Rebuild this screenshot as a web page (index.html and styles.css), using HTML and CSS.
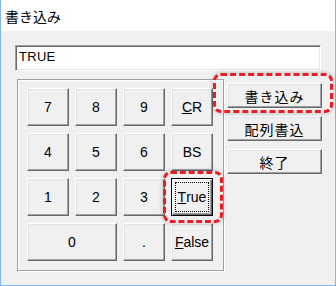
FILE: index.html
```html
<!DOCTYPE html>
<html lang="ja">
<head>
  <meta charset="UTF-8" />
  <title>書き込み</title>
  <link rel="stylesheet" href="styles.css">
</head>
<body>
  <div class="window">
    <div class="titlebar">書き込み</div>
    <div class="client">
      <div class="entry">TRUE</div>
      <div class="body">
        <div class="keypad">
          <button class="key">7</button>
          <button class="key">8</button>
          <button class="key">9</button>
          <button class="key"><u>C</u>R</button>
          <button class="key">4</button>
          <button class="key">5</button>
          <button class="key">6</button>
          <button class="key">BS</button>
          <button class="key">1</button>
          <button class="key">2</button>
          <button class="key">3</button>
          <button class="key focused"><span class="focus-ring"><u>T</u>rue</span></button>
          <button class="key wide">0</button>
          <button class="key">.</button>
          <button class="key"><u>F</u>alse</button>
        </div>
        <div class="actions">
          <button class="action">書き込み</button>
          <button class="action">配列書込</button>
          <button class="action">終了</button>
        </div>
      </div>
    </div>
    <!-- highlight marks drawn over the dialog -->
    <div class="mark mark-write"></div>
    <div class="mark mark-true"></div>
  </div>
</body>
</html>
```

FILE: styles.css
```css
body {
  margin: 0;
  font-family: "Liberation Sans", "Noto Sans CJK JP", sans-serif;
}

.window {
  position: relative;
  width: 336px;
  height: 286px;
  box-sizing: border-box;
  border: 1px solid #83b6ea;
  border-top: none;
  background: #f0f0f0;
  display: flex;
  flex-direction: column;
}

.titlebar {
  height: 31px;
  box-sizing: border-box;
  padding: 2px 0 0 4px;
  line-height: 29px;
  background: #fff;
  color: #000;
  font-family: "Noto Sans CJK JP", sans-serif;
  font-size: 14px;
}

.client {
  flex: 1;
  padding: 14px 13px 0 14px;
}

.entry {
  height: 26px;
  box-sizing: border-box;
  padding: 0 3px;
  line-height: 22px;
  font-size: 13px;
  letter-spacing: 0.3px;
  background: #fff;
  border: 1px solid;
  border-color: #a0a0a0 #fff #fff #a0a0a0;
  box-shadow: inset 1px 1px #696969, inset -1px -1px #e3e3e3;
  margin-right: 1px;
}

.body {
  display: flex;
  margin-top: 8px;
  padding-left: 2px;
}

.keypad {
  display: grid;
  grid-template-columns: repeat(4, 42px);
  grid-auto-rows: 38px;
  gap: 7px 6px;
  padding: 8px 10px 9px 9px;
  border: 1px solid #a0a0a0;
  box-shadow: 1px 1px #fff, inset 1px 1px #fff;
}

button {
  margin: 0;
  padding: 0;
  font-family: "Liberation Sans", "Noto Sans CJK JP", sans-serif;
  font-size: 14px;
  color: #000;
  background: #f0f0f0;
  border: 1px solid;
  border-color: #fff #696969 #696969 #fff;
  box-shadow: inset -1px -1px #a0a0a0, inset 1px 1px #e3e3e3;
}

.key.wide {
  grid-column: span 2;
}

.key.focused {
  border-color: #000;
  box-shadow: inset 1px 1px #fff, inset -1px -1px #696969, inset -2px -2px #a0a0a0;
  display: flex;
  padding: 3px;
}

.focus-ring {
  flex: 1;
  display: flex;
  align-items: center;
  justify-content: center;
  border: 1px dotted #000;
}

.actions {
  display: flex;
  flex-direction: column;
  gap: 8px;
  margin: 4px 0 0 3px;
  width: 95px;
}

.action {
  height: 25px;
  letter-spacing: 1px;
}

.mark {
  position: absolute;
  box-sizing: border-box;
  border: 3px dashed #ea1c24;
  border-radius: 8px;
  box-shadow: 0 0 4px rgba(0, 0, 0, 0.25);
}

.mark-write {
  left: 212px;
  top: 73px;
  width: 120px;
  height: 40px;
}

.mark-true {
  left: 162px;
  top: 171px;
  width: 60px;
  height: 52px;
}
```
